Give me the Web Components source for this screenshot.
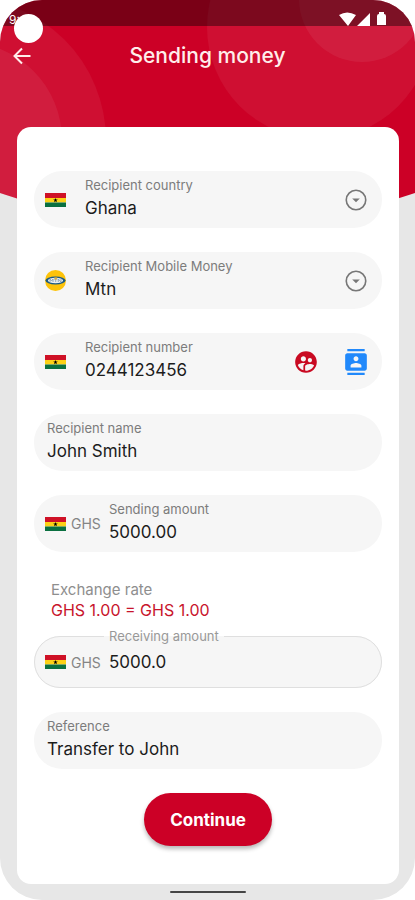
<!DOCTYPE html>
<html lang="en">
<head>
<meta charset="utf-8">
<meta name="viewport" content="width=device-width, initial-scale=1">
<title>Sending money</title>
<style>
  body { margin: 0; background: #fff; font-family: Inter, "Open Sans", sans-serif; color: #1c1c1c; }
</style>
</head>
<body>
<phone-screen>
  <status-bar slot="status"></status-bar>
  <app-bar slot="bar">Sending money</app-bar>
  <form-card>
    <text-field kind="select" label="Recipient country" value="Ghana"><flag-ghana slot="lead"></flag-ghana></text-field>
    <text-field kind="select" label="Recipient Mobile Money" value="Mtn"><mtn-logo slot="lead"></mtn-logo></text-field>
    <text-field label="Recipient number" value="0244123456">
      <flag-ghana slot="lead"></flag-ghana>
      <icon-button slot="trail" name="people" label="Choose a saved recipient"></icon-button>
      <icon-button slot="trail" name="contacts" label="Choose from contacts"></icon-button>
    </text-field>
    <text-field plain label="Recipient name" value="John Smith"></text-field>
    <text-field currency="GHS" label="Sending amount" value="5000.00"><flag-ghana slot="lead"></flag-ghana></text-field>
    <exchange-rate><span slot="title">Exchange rate</span>GHS 1.00 = GHS 1.00</exchange-rate>
    <outlined-field currency="GHS" label="Receiving amount" value="5000.0"><flag-ghana slot="lead"></flag-ghana></outlined-field>
    <text-field plain label="Reference" value="Transfer to John"></text-field>
    <primary-button>Continue</primary-button>
  </form-card>
</phone-screen>

<script>
  const define = (name, render) => customElements.define(name, class extends HTMLElement {
    constructor() { super(); this.attachShadow({ mode: 'open' }); }
    connectedCallback() { this.shadowRoot.innerHTML = render(this); }
  });

  const icons = {
    people: ['#c90a22', 'M11.99 2c-5.52 0-10 4.48-10 10s4.48 10 10 10 10-4.48 10-10-4.48-10-10-10zm3.61 6.34c1.07 0 1.93.86 1.93 1.93 0 1.07-.86 1.93-1.93 1.93-1.07 0-1.93-.86-1.93-1.93-.01-1.07.86-1.93 1.93-1.93zm-6-1.58c1.3 0 2.36 1.06 2.36 2.36 0 1.3-1.06 2.36-2.36 2.36s-2.36-1.06-2.36-2.36c0-1.31 1.05-2.36 2.36-2.36zm0 9.13v3.75c-2.4-.75-4.3-2.6-5.14-4.96 1.05-1.12 3.67-1.69 5.14-1.69.53 0 1.2.08 1.9.22-1.64.87-1.9 2.02-1.9 2.68zM11.99 20c-.27 0-.53-.01-.79-.04v-4.07c0-1.42 2.94-2.13 4.4-2.13 1.07 0 2.92.39 3.84 1.15-1.17 2.97-4.06 5.09-7.45 5.09z'],
    contacts: ['#2189fb', 'M20 0H4v2h16V0zM4 24h16v-2H4v2zM20 4H4c-1.1 0-2 .9-2 2v12c0 1.1.9 2 2 2h16c1.1 0 2-.9 2-2V6c0-1.1-.9-2-2-2zm-8 2.75c1.24 0 2.25 1.01 2.25 2.25s-1.01 2.25-2.25 2.25S9.75 10.24 9.75 9 10.76 6.75 12 6.75zM17 17H7v-1.5c0-1.67 3.33-2.5 5-2.5s5 .83 5 2.5V17z']
  };

  define('phone-screen', () => `
    <style>
      :host { display: grid; grid-template: auto auto 1fr auto / minmax(0, 1fr); min-height: 100vh; overflow: hidden; background: #e7e7e7; border-radius: 42px; }
      .art { grid-area: 1 / 1 / 5 / 2; width: 100%; height: auto; display: block; }
      .status { grid-area: 1 / 1; } .bar { grid-area: 2 / 1; }
      main { grid-area: 3 / 1; display: grid; grid-template-columns: minmax(0, 1fr); padding: 41px 16px 0 17px; }
      .home { grid-area: 4 / 1; justify-self: center; width: 76px; height: 2px; border-radius: 1px; background: #454545; margin: 7px 0; }
    </style>
    <svg class="art" viewBox="0 0 415 230" aria-hidden="true">
      <defs><clipPath id="c"><path d="M0 0H415V193L300 230H115L0 193Z"/></clipPath></defs>
      <g clip-path="url(#c)">
        <rect width="415" height="230" fill="#cc0026"/>
        <g fill="#fff" fill-opacity=".06">
          <circle cx="-36" cy="140" r="142"/><circle cx="-36" cy="140" r="98"/>
          <circle cx="319" cy="27" r="112"/><circle cx="362" cy="-1" r="63"/>
        </g>
      </g>
    </svg>
    <div class="status"><slot name="status"></slot></div>
    <div class="bar"><slot name="bar"></slot></div>
    <main><slot></slot></main>
    <div class="home"></div>`);

  define('status-bar', () => `
    <style>
      :host { display: flex; justify-content: space-between; align-items: flex-end; height: 26px; box-sizing: border-box; padding: 0 27px 0 9px; background: rgba(0, 0, 0, .4); color: #fff; position: relative; }
      span { font-size: 12px; line-height: 12px; }
      i { position: absolute; left: 14px; top: 14px; width: 29px; height: 29px; border-radius: 50%; background: #fff; }
      svg { display: block; }
    </style>
    <span>9:</span><i></i>
    <svg width="49" height="14" viewBox="0 0 49 14" fill="#fff" aria-hidden="true">
      <path d="M0 3Q8-2 17 3L9 14ZM18 14L31 1V14ZM38 4Q38 2 40 2V0H45V2Q47 2 47 4V13H38Z"/>
    </svg>`);

  define('app-bar', () => `
    <style>
      :host { display: grid; grid-template-columns: 36px 1fr 36px; align-items: center; height: 60px; padding: 0 4px; color: #fff; }
      button { all: unset; display: grid; place-items: center; width: 36px; height: 36px; cursor: pointer; }
      h1 { margin: 0; font-size: 21px; line-height: 28px; font-weight: 500; text-align: center; color: #ffeeeb; }
    </style>
    <button type="button" aria-label="Back"><svg width="20" height="20" viewBox="0 0 20 20" fill="none" stroke="#ffeeeb" stroke-width="2" aria-hidden="true"><path d="M18.500 10H3M10 2.500L2.500 10L10 17.500"/></svg></button>
    <h1><slot></slot></h1>`);

  define('form-card', () => `
    <style>
      :host { display: block; background: #fff; border-radius: 14px; }
      form { display: flex; flex-direction: column; gap: 24px; padding: 44px 17px 35px; }
    </style>
    <form><slot></slot></form>`);

  define('flag-ghana', () => `
    <style>:host { display: block; } svg { display: block; }</style>
    <svg width="21" height="14" viewBox="0 0 21 14" role="img" aria-label="Ghana">
      <path fill="#cf1126" d="M0 0H21V5H0z"/><path fill="#fcd116" d="M0 5H21V9.500H0z"/><path fill="#0a7040" d="M0 9.500H21V14H0z"/>
      <path d="M10.500 5l.6 1.600h1.700l-1.400 1 .5 1.600-1.400-1-1.400 1 .5-1.600-1.400-1h1.700z"/>
    </svg>`);

  define('mtn-logo', () => `
    <style>:host { display: block; } svg { display: block; }</style>
    <svg width="21" height="21" viewBox="0 0 21 21" role="img" aria-label="MTN">
      <circle cx="10.500" cy="10.500" r="10.500" fill="#fdc30a"/>
      <ellipse cx="10.500" cy="10.500" rx="10" ry="4" fill="#1b5a83"/>
      <ellipse cx="10.500" cy="10.500" rx="7.600" ry="2.800" fill="#e8eef1"/>
      <path d="M5 12V9L6.500 11L8 9V12M9 9H12.500M10.700 9V12M13.300 12V9L16 12V9" fill="none" stroke="#7f9bad" stroke-width=".8"/>
      <path d="M9.300 7.600H12.400L11.500 9.600H9.800z" fill="#e9b22d"/>
    </svg>`);

  define('icon-button', el => {
    const [fill, d] = icons[el.getAttribute('name')];
    return `
    <style>
      :host { display: block; }
      button { all: unset; display: block; cursor: pointer; }
      svg { display: block; }
    </style>
    <button type="button" aria-label="${el.getAttribute('label')}"><svg width="26" height="26" viewBox="0 0 24 24" fill="${fill}" aria-hidden="true"><path d="${d}"/></svg></button>`;
  });

  define('text-field', el => {
    const label = el.getAttribute('label'), value = el.getAttribute('value');
    const select = el.getAttribute('kind') === 'select', currency = el.getAttribute('currency');
    return `
    <style>
      :host { display: flex; align-items: center; height: 57px; box-sizing: border-box; padding: 0 13px 0 11px; border-radius: 28px; background: #f6f6f6; }
      :host([plain]) { padding-left: 13px; }
      .lead { display: flex; align-items: center; gap: 5px; width: 40px; flex: none; font-size: 14px; color: #858585; }
      :host([currency]) .lead { width: 64px; }
      :host([plain]) .lead { display: none; }
      .body { display: flex; flex-direction: column; gap: 2px; flex: 1; min-width: 0; padding-bottom: 4px; }
      label { font-size: 13px; line-height: 18px; color: #7c7c7c; }
      input, select { all: unset; display: block; width: 100%; height: 24px; font-size: 17px; line-height: 24px; color: #1c1c1c; }
      .trail { display: flex; align-items: center; gap: 24px; }
      .trail svg { display: block; }
    </style>
    <div class="lead"><slot name="lead"></slot>${currency ? `<span>${currency}</span>` : ''}</div>
    <div class="body">
      <label for="f">${label}</label>
      ${select ? `<select id="f"><option>${value}</option></select>` : `<input id="f" type="text" value="${value}">`}
    </div>
    <div class="trail"><slot name="trail"></slot>${select ? `<svg width="26" height="26" viewBox="0 0 24 24" aria-hidden="true"><circle cx="12" cy="12" r="9" fill="none" stroke="#777" stroke-width="1.500"/><path fill="#777" d="M8.500 10.500H15.500L12 14z"/></svg>` : ''}</div>`;
  });

  define('outlined-field', el => `
    <style>
      :host { display: block; margin-top: -17px; }
      fieldset { margin: 0; min-width: 0; border: 1px solid #dfdfdf; border-radius: 27px; background: #f6f6f6; padding: 0 13px 8px 10px; }
      legend { margin-left: 59px; padding: 0 5px; font-size: 13px; line-height: 18px; color: #999; }
      .row { display: flex; align-items: center; height: 34px; }
      .lead { display: flex; align-items: center; gap: 5px; width: 64px; flex: none; font-size: 14px; color: #858585; }
      input { all: unset; flex: 1; min-width: 0; height: 24px; font-size: 17px; line-height: 24px; color: #1c1c1c; }
    </style>
    <fieldset>
      <legend><label for="f">${el.getAttribute('label')}</label></legend>
      <div class="row">
        <div class="lead"><slot name="lead"></slot><span>${el.getAttribute('currency')}</span></div>
        <input id="f" type="text" value="${el.getAttribute('value')}">
      </div>
    </fieldset>`);

  define('exchange-rate', () => `
    <style>
      :host { display: block; padding: 4px 17px 0; font-size: 16px; line-height: 20px; color: #c8142c; }
      div { color: #8e8e8e; font-size: 15px; }
    </style>
    <div><slot name="title"></slot></div>
    <slot></slot>`);

  define('primary-button', () => `
    <style>
      :host { display: flex; justify-content: center; }
      button { all: unset; box-sizing: border-box; height: 53px; padding: 0 25px; min-width: 128px; border-radius: 27px; background: #cc0026; color: #fff; font-size: 17px; line-height: 24px; font-weight: 700; text-align: center; cursor: pointer; box-shadow: 0 3px 4px rgba(0, 0, 0, .28); }
    </style>
    <button type="button"><slot></slot></button>`);
</script>
</body>
</html>
